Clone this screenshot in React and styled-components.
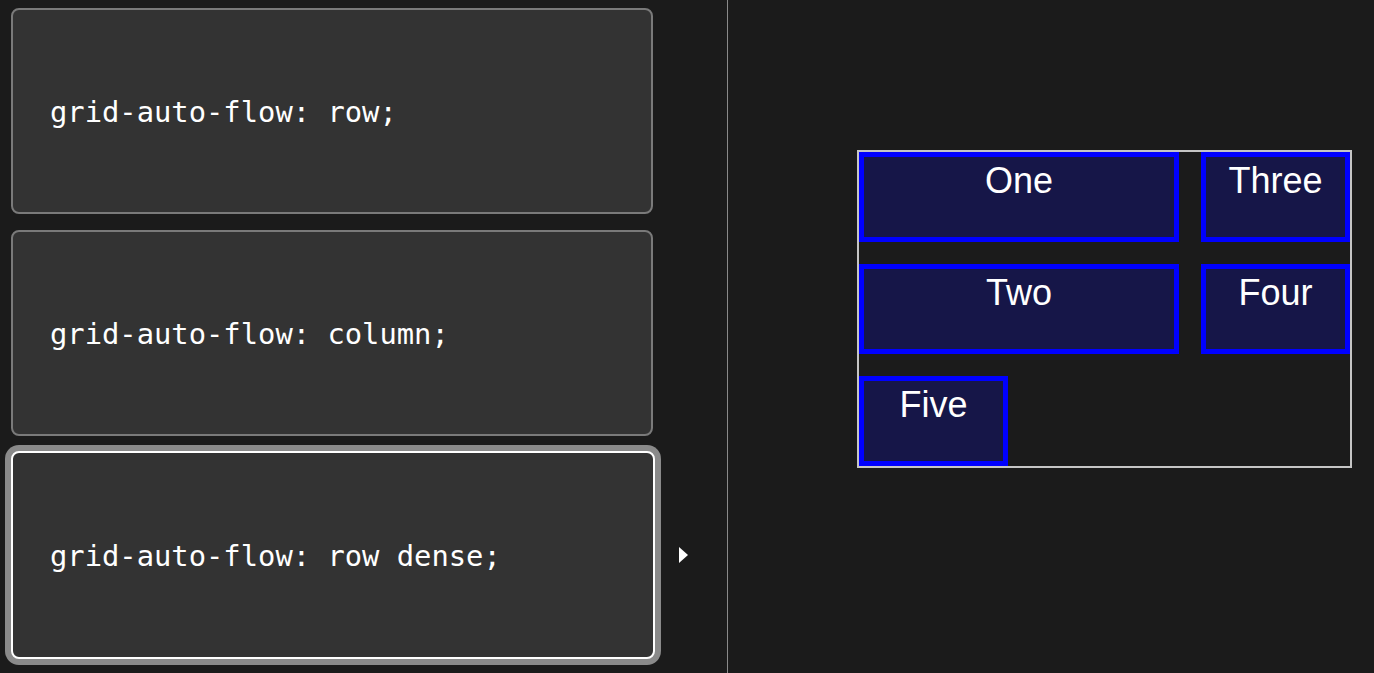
import React from "react";
import styled, { createGlobalStyle } from "styled-components";

const Global = createGlobalStyle`
  html, body { margin: 0; padding: 0; background: #1b1b1b; }
  body { width: 1374px; height: 673px; overflow: hidden; }
`;

const Page = styled.div`
  display: flex;
  width: 1374px;
  height: 673px;
  background: #1b1b1b;
`;

const Choices = styled.div`
  width: 728px;
  flex: none;
  border-right: 1px solid #8a8a8a;
  padding: 8px 0 0 11px;
  box-sizing: border-box;
  display: flex;
  flex-direction: column;
  gap: 16px;
`;

const Row = styled.div`
  display: flex;
  align-items: center;
  margin-top: ${(p) => (p.$selected ? "-1px" : "0")};
`;

const Card = styled.div`
  box-sizing: border-box;
  width: ${(p) => (p.$selected ? "644px" : "642px")};
  height: ${(p) => (p.$selected ? "208px" : "206px")};
  background: #333333;
  border: 2px solid ${(p) => (p.$selected ? "#ffffff" : "#7a7a7a")};
  border-radius: 8px;
  box-shadow: ${(p) => (p.$selected ? "0 0 0 6px #8a8a8a" : "none")};
  display: flex;
  align-items: center;
  padding-left: 37px;
  padding-top: 2px;
  font-family: "DejaVu Sans Mono", monospace;
  font-size: 28.8px;
  color: #ffffff;
  white-space: pre;
`;

const Arrow = styled.span`
  width: 0;
  height: 0;
  margin-left: 24px;
  border-top: 8.5px solid transparent;
  border-bottom: 8.5px solid transparent;
  border-left: 9px solid #ffffff;
  visibility: ${(p) => (p.$show ? "visible" : "hidden")};
`;

const Output = styled.div`
  flex: 1;
  padding: 150px 0 0 129px;
  box-sizing: border-box;
`;

const Example = styled.div`
  box-sizing: border-box;
  width: 495px;
  border: 2px solid #c5c5c5;
  display: grid;
  grid-template-columns: repeat(3, 1fr);
  grid-template-rows: repeat(3, minmax(90px, auto));
  gap: 22px;
  grid-auto-flow: row dense;
`;

const Item = styled.div`
  box-sizing: border-box;
  grid-column: ${(p) => (p.$span ? "auto / span 2" : "auto")};
  background: #161648;
  border: 5px solid #0000ff;
  color: #ffffff;
  font-family: "Liberation Sans", Arial, sans-serif;
  font-size: 36px;
  text-align: center;
  padding-top: 3px;
`;

const options = [
  "grid-auto-flow: row;",
  "grid-auto-flow: column;",
  "grid-auto-flow: row dense;",
];

export default function App() {
  return (
    <>
      <Global />
      <Page>
        <Choices>
          {options.map((o, i) => (
            <Row key={o} $selected={i === 2}>
              <Card $selected={i === 2}>{o}</Card>
              <Arrow $show={i === 2} />
            </Row>
          ))}
        </Choices>
        <Output>
          <Example>
            <Item $span>One</Item>
            <Item $span>Two</Item>
            <Item>Three</Item>
            <Item>Four</Item>
            <Item>Five</Item>
          </Example>
        </Output>
      </Page>
    </>
  );
}
